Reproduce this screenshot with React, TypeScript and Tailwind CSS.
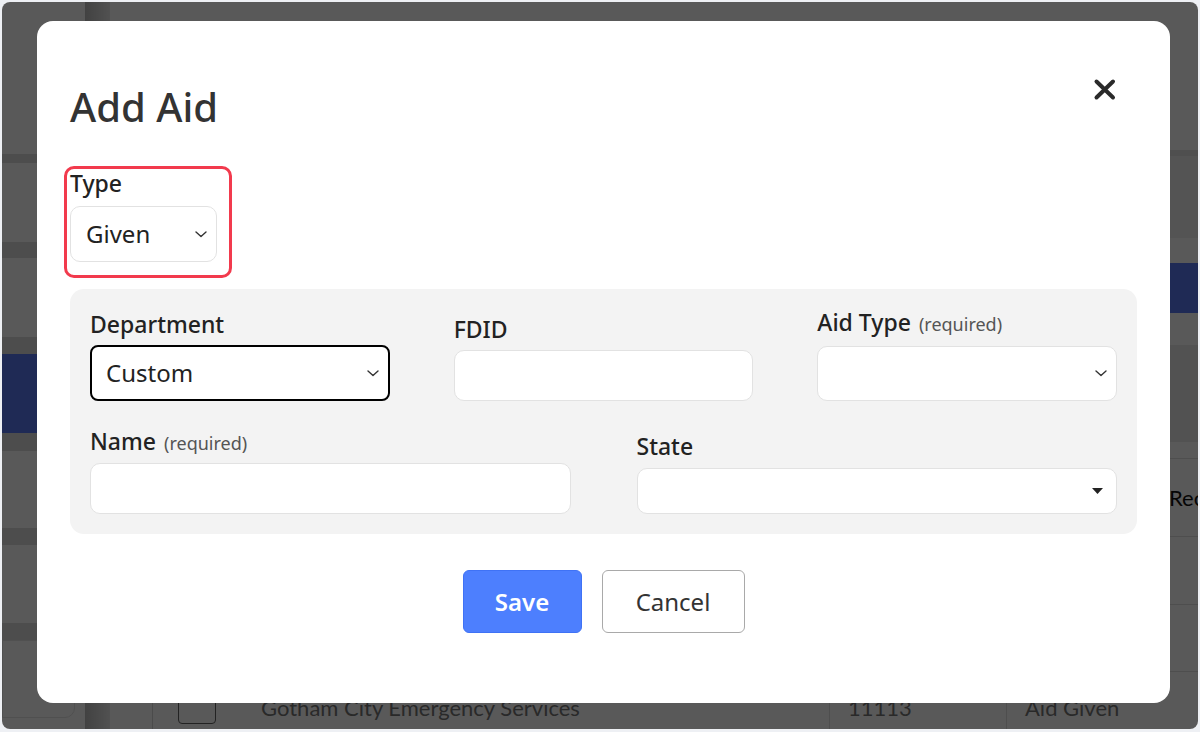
import React from 'react';

const Chevron = () => (
  <svg width="12" height="7" viewBox="0 0 12 7" fill="none">
    <path d="M1 1l5 4.5L11 1" stroke="#333" strokeWidth="1.4" strokeLinecap="round" strokeLinejoin="round" />
  </svg>
);

const Caret = () => (
  <svg width="11" height="6" viewBox="0 0 11 6">
    <path d="M0 0h11L5.5 6z" fill="#222" />
  </svg>
);

const Label = ({ children, hint }: { children: React.ReactNode; hint?: string }) => (
  <div className="whitespace-nowrap text-[23px] leading-[28px] font-medium text-[#222]">
    {children}
    {hint && <span className="ml-2 text-[18px] font-normal text-[#555]">{hint}</span>}
  </div>
);

const Backdrop = () => (
  <div className="flex h-full bg-white font-['Lato',sans-serif] text-[22px] text-[#777]">
    {/* side nav */}
    <div className="flex w-[83px] shrink-0 flex-col">
      <div className="h-[152px] bg-white" />
      <div className="h-[9px] bg-[#dcdcdc]" />
      <div className="h-[79px] bg-white" />
      <div className="h-[16px] bg-[#dcdcdc]" />
      <div className="h-[79px] bg-white" />
      <div className="h-[17px] bg-[#dcdcdc]" />
      <div className="h-[79px] bg-[#5978f3]" />
      <div className="h-[18px] bg-[#dcdcdc]" />
      <div className="h-[77px] bg-white" />
      <div className="h-[17px] bg-[#dcdcdc]" />
      <div className="h-[78px] bg-white" />
      <div className="h-[17px] bg-[#dcdcdc]" />
      <div className="mr-[10px] h-[78px] rounded-br-[10px] border border-[#e4e4e4] bg-white" />
    </div>
    <div className="w-[25px] shrink-0 bg-gradient-to-r from-[#bdbdbd] to-[#e8e8e8]" />

    {/* main */}
    <div className="flex min-w-0 flex-1 flex-col overflow-hidden">
      <div className="h-[148px] shrink-0 bg-white" />
      <div className="h-[6px] shrink-0 bg-[#e2e2e2]" />
      <div className="h-[82px] shrink-0 bg-[#f0f0f0]" />
      <div className="h-[25px] shrink-0 bg-white" />
      <div className="h-[50px] shrink-0 bg-[#5978f3]" />
      <div className="h-[32px] shrink-0 bg-white" />
      <div className="h-[97px] shrink-0 bg-[#ececec]" />
      <div className="h-[16px] shrink-0 bg-white" />

      <div className="ml-[42px] flex shrink-0 flex-col border-l border-[#d6d6d6]">
        <div className="flex h-[79px] items-center border-y border-[#dedede]">
          <div className="w-[1016px] shrink-0" />
          <div className="whitespace-nowrap text-[#111]">Received</div>
        </div>
        <div className="h-[68px] border-b border-[#dedede]" />
        <div className="h-[67px] border-b border-[#dedede]" />
        <div className="flex h-[70px] items-center">
          <div className="flex w-[88px] shrink-0 justify-center">
            <div className="h-[34px] w-[38px] rounded-[4px] border-[1.5px] border-[#666]" />
          </div>
          <div className="flex h-full w-[588px] shrink-0 items-center pl-5">Gotham City Emergency Services</div>
          <div className="flex h-full w-[177px] shrink-0 items-center border-l border-[#dedede] pl-[18px]">11113</div>
          <div className="flex h-full items-center border-l border-[#dedede] pl-[18px] whitespace-nowrap">Aid Given</div>
        </div>
      </div>
    </div>
  </div>
);

const Modal = () => (
  <div className="relative flex h-[682px] w-[1133px] flex-col rounded-[16px] bg-white px-[33px] pt-[57px] font-['Noto_Sans',sans-serif] text-[#222]">
    <div className="flex items-start justify-between">
      <h1 className="mt-[5px] text-[40px] leading-[48px] font-medium text-[#333]">Add Aid</h1>
      <button className="mr-[20px] flex h-6 w-6 items-center justify-center">
        <svg width="24" height="24" viewBox="0 0 24 24" fill="none">
          <path d="M3.5 3.5l16.5 16M20 3.5l-16.5 16" stroke="#2a2a2a" strokeWidth="4" strokeLinecap="round" />
        </svg>
      </button>
    </div>

    <div className="relative mt-[38px] self-start">
      <Label>Type</Label>
      <div className="mt-[9px] flex h-[56px] w-[147px] items-center justify-between rounded-[10px] border border-[#e2e2e2] pl-[15px] pr-[9px] text-[24px] text-[#222]">
        <span>Given</span>
        <Chevron />
      </div>
      <div className="pointer-events-none absolute -left-[6px] -top-[3px] h-[112px] w-[168px] rounded-[10px] border-[3px] border-[#f23a4d]" />
    </div>

    <div className="mt-[27px] rounded-[14px] bg-[#f3f3f3] px-5 pt-[19px] pb-5">
      <div className="grid grid-cols-3 items-end gap-x-16">
        <div>
          <Label>Department</Label>
          <div className="mt-[7px] flex h-[56px] items-center justify-between rounded-[8px] border-2 border-black bg-white pl-[14px] pr-[9px] text-[24px]">
            <span>Custom</span>
            <Chevron />
          </div>
        </div>
        <div>
          <Label>FDID</Label>
          <div className="mt-[7px] h-[51px] rounded-[10px] border border-[#e2e2e2] bg-white" />
        </div>
        <div>
          <Label hint="(required)">Aid Type</Label>
          <div className="mt-2 flex h-[55px] items-center justify-end rounded-[10px] border border-[#e2e2e2] bg-white pr-[9px]">
            <Chevron />
          </div>
        </div>
      </div>
      <div className="mt-[26px] grid grid-cols-2 items-end gap-x-[66px]">
        <div>
          <Label hint="(required)">Name</Label>
          <div className="mt-[6px] h-[51px] rounded-[10px] border border-[#e2e2e2] bg-white" />
        </div>
        <div>
          <Label>State</Label>
          <div className="mt-2 flex h-[46px] items-center justify-end rounded-[10px] border border-[#e2e2e2] bg-white pr-[13px]">
            <Caret />
          </div>
        </div>
      </div>
    </div>

    <div className="mt-9 flex justify-center gap-5">
      <button className="h-[63px] w-[119px] rounded-[6px] border border-[#3f72f5] bg-[#4d7ffe] text-[24px] font-semibold text-white">
        Save
      </button>
      <button className="h-[63px] w-[143px] rounded-[6px] border border-[#a9a9a9] bg-white text-[24px] text-[#333]">
        Cancel
      </button>
    </div>
  </div>
);

export default function App() {
  return (
    <div className="h-[732px] w-[1200px] bg-[#eef0f4] px-[2px] pt-[2px]">
      <div className="relative h-[727px] overflow-hidden rounded-[8px]">
        <Backdrop />
        <div className="absolute inset-0 bg-black/65 pl-[35px] pt-[19px]">
          <Modal />
        </div>
      </div>
    </div>
  );
}
